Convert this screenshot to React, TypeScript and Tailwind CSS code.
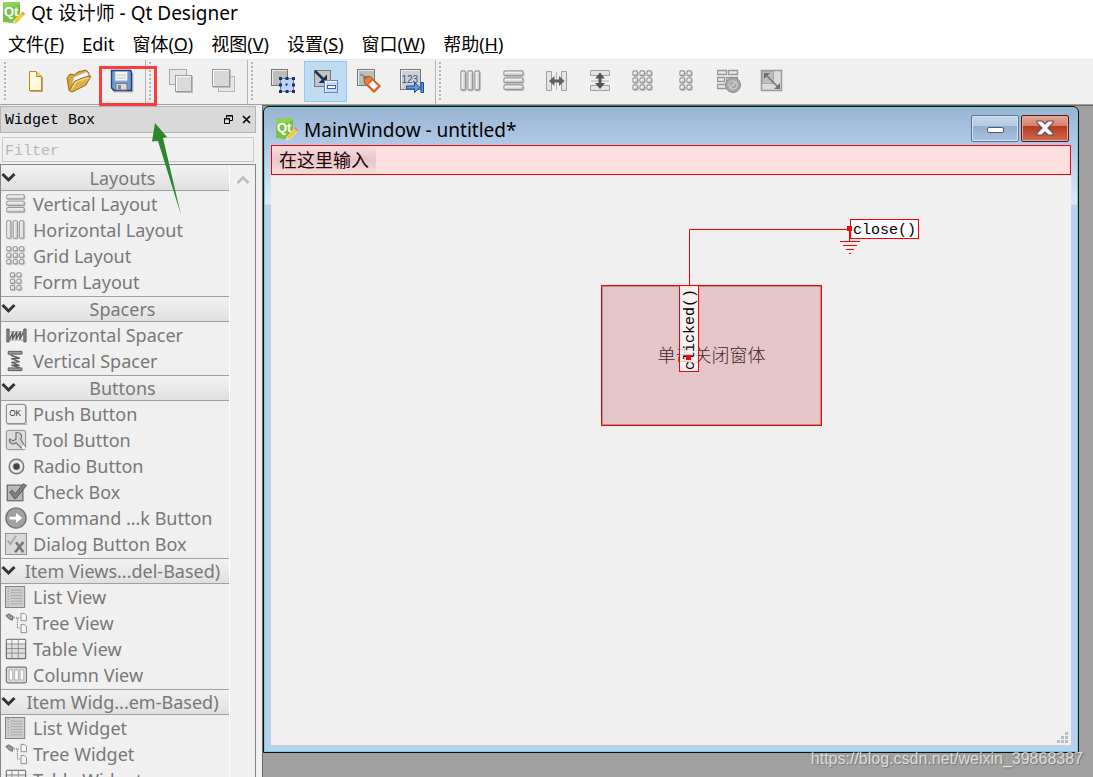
import React from "react";

type IconProps = { size?: number };
type Rect = [number, number, number, number];

const Svg = ({ size = 24, children }: { size?: number; children: React.ReactNode }) => (
  <svg width={size} height={size} viewBox="0 0 24 24" fill="none" className="shrink-0" aria-hidden="true">
    {children}
  </svg>
);

// small raised bars used by all the layout icons
const Cells = ({ size, rects }: IconProps & { rects: Rect[] }) => (
  <Svg size={size}>
    {rects.map(([x, y, w, h], i) => (
      <g key={i}>
        <rect x={x + 1} y={y + 1} width={w} height={h} rx="1" stroke="#c4c4c4" />
        <rect x={x} y={y} width={w} height={h} rx="1" fill="#dedede" stroke="#989898" strokeWidth="1.3" />
        <path d={`M${x + 1.2} ${y + h - 1}V${y + 1.2}H${x + w - 1}`} stroke="#fafafa" />
      </g>
    ))}
  </Svg>
);

const rowsRects: Rect[] = [[2, 2, 19, 4.5], [2, 9, 19, 4.5], [2, 16, 19, 4.5]];
const colsRects: Rect[] = [[2, 2, 4.5, 19], [9, 2, 4.5, 19], [16, 2, 4.5, 19]];
const gridRects: Rect[] = [2, 9, 16].flatMap((y) => [2, 9, 16].map((x): Rect => [x, y, 4.5, 4.5]));
const formRects: Rect[] = [2, 9, 16].flatMap((y) => [6, 13].map((x): Rect => [x, y, 4.5, 4.5]));

const RowsIcon = ({ size }: IconProps) => <Cells size={size} rects={rowsRects} />;
const ColsIcon = ({ size }: IconProps) => <Cells size={size} rects={colsRects} />;
const GridIcon = ({ size }: IconProps) => <Cells size={size} rects={gridRects} />;
const FormIcon = ({ size }: IconProps) => <Cells size={size} rects={formRects} />;

const QtLogo = () => (
  <svg width="24" height="24" viewBox="0 0 24 24" className="shrink-0" aria-hidden="true">
    <path d="M2 1.500L19 1V18L15 22.500L2 21Z" fill="#7ac143" />
    <path d="M2 1.500L19 1V3L2 10Z" fill="#8fd05b" />
    <text x="3" y="15" fill="#fff" fontSize="13" fontWeight="700" fontFamily="'Liberation Sans Narrow','Liberation Sans',sans-serif">Qt</text>
    <path d="M13 20L20 12L23 14.500L16 22L12 23Z" fill="#f7c81e" stroke="#fff" strokeWidth=".6" />
    <path d="M20 12L21.500 10.500L24 13L23 14.500Z" fill="#d98b7c" />
    <path d="M12 23L13 20L16 22Z" fill="#e9cf9f" />
  </svg>
);

const NewIcon = () => (
  <Svg>
    <path d="M5.500 2.500H12L17.500 7V21.500H5.500Z" fill="#fcf6c6" stroke="#b98d1c" />
    <path d="M7 4H12V8H16V20H7Z" fill="#fffbe2" />
    <path d="M12.500 2.500V7.500H17.500" fill="#f0d87a" stroke="#b98d1c" />
    <path d="M6 22.500H18.500V8" stroke="#8a7440" strokeOpacity=".6" />
  </Svg>
);

const OpenIcon = () => (
  <svg width="26" height="24" viewBox="0 0 26 24" aria-hidden="true">
    <path d="M1 9L4 5L8 6L12 3L20 1L23 4V9L8 22L3 21Z" fill="#d9a437" stroke="#9b6b12" />
    <path d="M6 16L8 8L20 3L22 4V10Z" fill="#fff" stroke="#bdbdbd" />
    <path d="M3 21.500L9 12L19 8L25 7L20 16L6 23Z" fill="#e0b04c" stroke="#9b6b12" />
    <path d="M6 20L10 13L23 8.500" stroke="#f8dc94" strokeWidth="1.200" fill="none" />
  </svg>
);

const SaveIcon = () => (
  <Svg>
    <path d="M1.500 1.500H20.500L21.500 3V21.500H4L1.500 19Z" fill="#6f9ad2" stroke="#213f78" strokeWidth="1.400" />
    <path d="M5 2.500H17.500V12H5Z" fill="#f4f6f8" stroke="#9fb5cc" />
    <path d="M6.500 6H16M6.500 9H16" stroke="#bcc4cc" />
    <path d="M6 14.500H17V21H6Z" fill="#dcdcdc" stroke="#7a7a7a" />
    <path d="M8 16H11V20.500H8Z" fill="#7a8796" />
    <path d="M4 22.800H22.800V4" stroke="#333" strokeOpacity=".4" />
  </Svg>
);

const RaiseIcon = () => (
  <Svg>
    <rect x=".5" y=".5" width="17" height="15" fill="#e6e6e6" stroke="#aaa" />
    <rect x="6.500" y="6.500" width="16" height="16" fill="#dadada" stroke="#9a9a9a" />
    <path d="M7.500 22V7.500H22" stroke="#fafafa" />
    <path d="M7 23.500H23.500V7" stroke="#bbb" />
  </Svg>
);

const LowerIcon = () => (
  <Svg>
    <rect x="6.500" y="7.500" width="16" height="15" fill="#e6e6e6" stroke="#b4b4b4" />
    <rect x=".5" y=".5" width="17" height="17" fill="#d8d8d8" stroke="#9a9a9a" />
    <path d="M1.500 17V1.500H17" stroke="#fafafa" />
    <path d="M1 18.500H18.500V1" stroke="#c0c0c0" />
  </Svg>
);

const EditWidgetsIcon = () => (
  <Svg>
    <rect x=".5" y=".5" width="16" height="16" fill="#bdbdbd" stroke="#777" />
    <path d="M1.500 16V1.500H16" stroke="#e8e8e8" />
    <rect x="9.500" y="9.500" width="13" height="13" fill="#bcd4fb" stroke="#6a82ad" />
    {[9.5, 16, 22.5].map((y) =>
      [9.5, 16, 22.5].map((x) => (
        <rect key={`${x}-${y}`} x={x - 1.5} y={y - 1.5} width={x === 16 && y === 16 ? 2 : 3} height={x === 16 && y === 16 ? 2 : 3} fill="#1f3156" />
      ))
    )}
  </Svg>
);

const EditSignalsIcon = () => (
  <Svg>
    <rect x=".5" y="1.500" width="16" height="16" fill="#c4c4c4" stroke="#777" />
    <path d="M1 2L11 12" stroke="#1f3156" strokeWidth="2.500" />
    <path d="M13 14V5.500L4.500 14Z" fill="#1f3156" />
    <rect x="10.500" y="11.500" width="13" height="12" fill="#c4dafc" stroke="#6b83ad" />
    <path d="M11.500 23V12.500H23" stroke="#fff" />
    <rect x="13.500" y="16.500" width="8" height="3" fill="#fff" stroke="#41639f" />
  </Svg>
);

const EditBuddiesIcon = () => (
  <Svg>
    <rect x=".5" y=".5" width="17" height="16" fill="#bcbcbc" stroke="#777" />
    <path d="M1.500 16V1.500H17" stroke="#ebebeb" />
    <path d="M7 8L13 7.500L23.500 17L17 23.500L7.500 14Z" fill="#e58340" stroke="#8a5530" />
    <path d="M15.500 10.500L22 17L17 22L10.500 15.500Z" fill="#fff" stroke="#f15a0c" strokeWidth="1.600" />
    <path d="M3 6C5 5 7 7 10 10" stroke="#555" />
  </Svg>
);

const TabOrderIcon = () => (
  <Svg>
    <rect x=".5" y=".5" width="20" height="20" fill="#cfcfcf" stroke="#777" />
    <path d="M1.500 20V1.500H20" stroke="#f0f0f0" />
    <text x="1.500" y="14" fill="#24589c" fontSize="10" fontFamily="'Liberation Sans Narrow','Liberation Sans',sans-serif">123</text>
    <path d="M6.500 17H14.500V13.500L20 18.500L14.500 23.500V20H6.500Z" fill="#5f9be6" stroke="#1d4a8c" />
    <path d="M21 13.500H23.500V23.500H21Z" fill="#5f9be6" stroke="#1d4a8c" />
  </Svg>
);

const HSplitIcon = () => (
  <Svg>
    <path d="M1.500 2.500H6.500V21.500H1.500ZM21.500 2.500H16.500V21.500H21.500Z" fill="#e4e4e4" stroke="#a0a0a0" />
    <path d="M11.500 3V21" stroke="#b5b5b5" />
    <path d="M4 12L9.500 7V10.500H14V7L19.500 12L14 17V13.500H9.500V17Z" fill="#606060" />
  </Svg>
);

const VSplitIcon = () => (
  <Svg>
    <path d="M2.500 1.500H21.500V6.500H2.500ZM2.500 16.500H21.500V21.500H2.500Z" fill="#e4e4e4" stroke="#a0a0a0" />
    <path d="M3 12H21" stroke="#b5b5b5" />
    <path d="M12 3.500L17 9.500H13.500V14H17L12 20L7 14H10.500V9.500H7Z" fill="#555" />
  </Svg>
);

const BreakLayoutIcon = () => (
  <Svg>
    <path d="M.5 1.500H9.500V5.500H.5ZM11.500 1.500H20.500V5.500H11.500ZM.5 8.500H7.500V12.500H.5ZM9.500 8.500H20.500V12.500H9.500ZM.5 15.500H9.500V19.500H.5Z" fill="#e8e8e8" stroke="#989898" strokeWidth="1.300" />
    <circle cx="16" cy="16" r="7.500" fill="#a6a6a6" stroke="#8c8c8c" />
    <circle cx="16" cy="16" r="4" stroke="#c8c8c8" strokeWidth="1.500" />
    <path d="M13 19L19 13" stroke="#c8c8c8" strokeWidth="1.800" />
  </Svg>
);

const AdjustSizeIcon = () => (
  <Svg>
    <rect x="1.500" y="1.500" width="20" height="20" fill="#dcdcdc" stroke="#999" strokeWidth="1.500" />
    <rect x="2.500" y="2.500" width="11" height="12" fill="#bdbdbd" stroke="#a8a8a8" />
    <path d="M6 6L18 18" stroke="#777" strokeWidth="1.600" />
    <path d="M4 4H10L4 10ZM20 20H14L20 14Z" fill="#707070" />
  </Svg>
);

const HSpacerIcon = ({ size }: IconProps) => (
  <Svg size={size}>
    <path d="M2 5.500H4.500V19.500H2ZM20.500 5.500H23V19.500H20.500Z" fill="#8a8a8a" stroke="#555" />
    <path d="M5 17L9 8L8 17L13 8L12 17L17 8L16 17L20 9" stroke="#5c5c5c" strokeWidth="1.500" />
    <path d="M5 8.500H20M5 17.500H20" stroke="#999" />
  </Svg>
);

const VSpacerIcon = ({ size }: IconProps) => (
  <Svg size={size}>
    <path d="M3.500 1.500H18.500V4.500H3.500ZM3.500 19.500H18.500V22.500H3.500Z" fill="#999" stroke="#555" />
    <path d="M6 5.500L16 9L7 9.500L16 13L7 13.500L16 17L7 16.500L16 19.500" stroke="#5c5c5c" strokeWidth="1.500" />
  </Svg>
);

const PushButtonIcon = ({ size }: IconProps) => (
  <Svg size={size}>
    <rect x="1.500" y="1.500" width="21" height="21" rx="2" fill="#eee" stroke="#777" />
    <path d="M2.500 23.500H23.500V3" stroke="#aaa" />
    <text x="4.500" y="14.500" fill="#333" fontSize="9" fontFamily="'Liberation Sans',sans-serif">OK</text>
  </Svg>
);

const ToolButtonIcon = ({ size }: IconProps) => (
  <Svg size={size}>
    <rect x="1.500" y="1.500" width="21" height="21" rx="2" fill="#dcdcdc" stroke="#888" />
    <path d="M12 4C16 3 20 7 17 11L21 18L18 21L12 15C8 18 4 15 5 11L9 13L12 11V8Z" fill="#d0d0d0" stroke="#777" strokeWidth="1.300" />
    <path d="M18 21L20 17L23 22Z" fill="#fff" />
  </Svg>
);

const RadioIcon = ({ size }: IconProps) => (
  <Svg size={size}>
    <circle cx="12.500" cy="12.500" r="8" fill="#cfcfcf" stroke="#777" strokeWidth="1.500" />
    <circle cx="12.500" cy="12.500" r="5.500" stroke="#f4f4f4" strokeWidth="1.500" />
    <circle cx="12.500" cy="12.500" r="3.500" fill="#444" />
  </Svg>
);

const CheckIcon = ({ size }: IconProps) => (
  <Svg size={size}>
    <rect x="2.500" y="4.500" width="17" height="17" fill="#b9b9b9" stroke="#6e6e6e" strokeWidth="1.400" />
    <path d="M5 12L8 10L11 14L20 3L23.500 5L12 19H10Z" fill="#808080" stroke="#585858" />
  </Svg>
);

const CommandIcon = ({ size }: IconProps) => (
  <Svg size={size}>
    <circle cx="12" cy="12" r="11" fill="#a2a2a2" stroke="#707070" strokeWidth="1.500" />
    <path d="M5 10.500H12V6.500L19 12L12 17.500V13.500H5Z" fill="#fff" />
  </Svg>
);

const DialogBoxIcon = ({ size }: IconProps) => (
  <Svg size={size}>
    <rect x=".5" y=".5" width="23" height="23" fill="#d8d8d8" stroke="#8c8c8c" />
    <path d="M3 8L6 12L12 3" stroke="#aaa" strokeWidth="2.200" />
    <path d="M12 10L20 21M20 10L11 21" stroke="#777" strokeWidth="2.800" />
  </Svg>
);

const ListIcon = ({ size }: IconProps) => (
  <Svg size={size}>
    <rect x=".5" y=".5" width="21" height="23" fill="#cfcfcf" stroke="#7c7c7c" />
    <path d="M3.500 2V22" stroke="#777" strokeDasharray="1 2" />
    <path d="M6 4.500H19M6 7.500H19M6 10.500H19M6 13.500H19M6 16.500H19M6 19.500H19" stroke="#a2a2a2" />
  </Svg>
);

const TreeIcon = ({ size }: IconProps) => (
  <Svg size={size}>
    <path d="M1 4L4 2L9 5L8 9L5 8Z" fill="#999" stroke="#666" />
    <path d="M10 6.500H16M13.500 7V17.500H16" stroke="#555" strokeDasharray="1 1" />
    <path d="M17.500 1.500H21L23.500 4V9.500H17.500ZM17.500 13.500H21L23.500 16V22.500H17.500Z" fill="#f4f4f4" stroke="#888" />
  </Svg>
);

const TableIcon = ({ size }: IconProps) => (
  <Svg size={size}>
    <rect x="1.500" y="1.500" width="21" height="21" rx="1" fill="#dedede" stroke="#6e6e6e" strokeWidth="1.300" />
    <path d="M2 2H22V6H2Z" fill="#f6f6f6" />
    <path d="M2 6.500H22M2 11.500H22M2 16.500H22M7.500 2V22M14.500 2V22" stroke="#8c8c8c" />
  </Svg>
);

const ColumnIcon = ({ size }: IconProps) => (
  <Svg size={size}>
    <rect x="1.500" y="3.500" width="22" height="17" rx="2" fill="#ddd" stroke="#777" strokeWidth="1.300" />
    <path d="M4.500 6.500H8.500V17.500H4.500ZM10.500 6.500H14.500V17.500H10.500ZM16.500 6.500H20.500V17.500H16.500Z" fill="#fff" stroke="#a8a8a8" />
  </Svg>
);

const menus = [
  { text: "文件", key: "F" },
  { text: "Edit" },
  { text: "窗体", key: "O" },
  { text: "视图", key: "V" },
  { text: "设置", key: "S" },
  { text: "窗口", key: "W" },
  { text: "帮助", key: "H" },
];

type Tool = { label: string; icon: React.FC<IconProps>; active?: boolean };

const toolGroups: Tool[][] = [
  [
    { label: "New", icon: NewIcon },
    { label: "Open", icon: OpenIcon },
    { label: "Save", icon: SaveIcon },
  ],
  [
    { label: "Send to Back", icon: RaiseIcon },
    { label: "Bring to Front", icon: LowerIcon },
  ],
  [
    { label: "Edit Widgets", icon: EditWidgetsIcon },
    { label: "Edit Signals/Slots", icon: EditSignalsIcon, active: true },
    { label: "Edit Buddies", icon: EditBuddiesIcon },
    { label: "Edit Tab Order", icon: TabOrderIcon },
  ],
  [
    { label: "Lay Out Horizontally", icon: ColsIcon },
    { label: "Lay Out Vertically", icon: RowsIcon },
    { label: "Horizontal Splitter", icon: HSplitIcon },
    { label: "Vertical Splitter", icon: VSplitIcon },
    { label: "Lay Out in a Grid", icon: GridIcon },
    { label: "Lay Out in a Form", icon: FormIcon },
    { label: "Break Layout", icon: BreakLayoutIcon },
    { label: "Adjust Size", icon: AdjustSizeIcon },
  ],
];

const sections: { title: string; items: [string, React.FC<IconProps>][] }[] = [
  {
    title: "Layouts",
    items: [
      ["Vertical Layout", RowsIcon],
      ["Horizontal Layout", ColsIcon],
      ["Grid Layout", GridIcon],
      ["Form Layout", FormIcon],
    ],
  },
  {
    title: "Spacers",
    items: [
      ["Horizontal Spacer", HSpacerIcon],
      ["Vertical Spacer", VSpacerIcon],
    ],
  },
  {
    title: "Buttons",
    items: [
      ["Push Button", PushButtonIcon],
      ["Tool Button", ToolButtonIcon],
      ["Radio Button", RadioIcon],
      ["Check Box", CheckIcon],
      ["Command ...k Button", CommandIcon],
      ["Dialog Button Box", DialogBoxIcon],
    ],
  },
  {
    title: "Item Views...del-Based)",
    items: [
      ["List View", ListIcon],
      ["Tree View", TreeIcon],
      ["Table View", TableIcon],
      ["Column View", ColumnIcon],
    ],
  },
  {
    title: "Item Widg...em-Based)",
    items: [
      ["List Widget", ListIcon],
      ["Tree Widget", TreeIcon],
      ["Table Widget", TableIcon],
    ],
  },
];

const ToolBar = () => (
  <div className="flex h-[46px] shrink-0 border-t border-b border-t-[#e8e8e8] border-b-[#a0a0a0] bg-[#f0f0f0] pl-px">
    {toolGroups.map((group, i) => (
      <div key={i} className={`flex items-center pr-0.5 pb-0.5 ${i < 3 ? "border-r border-[#b4b4b4]" : ""}`}>
        <div className="flex w-[13px] pl-[3px]">
          <svg width="3" height="38" aria-hidden="true">
            <path d="M1 0V38" stroke="#b4b4b4" strokeWidth="2" strokeDasharray="2 2" />
          </svg>
        </div>
        {group.map(({ label, icon: Icon, active }) => (
          <button
            key={label}
            aria-label={label}
            className={`flex h-[41px] w-[43px] items-center justify-center ${active ? "border border-[#90c8f6] bg-[#c0dcf3]" : ""}`}
          >
            <Icon />
          </button>
        ))}
      </div>
    ))}
  </div>
);

const WidgetBox = () => (
  <aside className="flex w-64 shrink-0 flex-col pt-px">
    <div className="flex h-[27px] shrink-0 items-center border border-[#b4b4b4] bg-[#d9d9d9] pl-1 font-['Liberation_Mono','Noto_Sans_CJK_SC',monospace] text-[15px]">
      <h2 className="flex-1 pt-1">Widget Box</h2>
      <button aria-label="Float" className="flex w-[18px] justify-center">
        <svg width="9" height="9" viewBox="0 0 9 9" fill="none" aria-hidden="true">
          <path d="M2.500 3V.5H8.500V5.500H6M2.500 1H8.500M.5 3.500H5.500V8.500H.5ZM.5 4H5.500" stroke="#000" />
        </svg>
      </button>
      <button aria-label="Close dock" className="flex w-[18px] justify-center">
        <svg width="9" height="9" viewBox="0 0 9 9" aria-hidden="true">
          <path d="M1 1L8 8M8 1L1 8" stroke="#000" strokeWidth="1.600" />
        </svg>
      </button>
    </div>
    <div className="px-0.5 pt-1 pb-0.5">
      <input
        aria-label="Filter"
        placeholder="Filter"
        className="block h-[25px] w-full border border-[#c8c8c8] bg-[#f0f0f0] px-0.5 pt-1 font-['Liberation_Mono','Noto_Sans_CJK_SC',monospace] text-[15px] placeholder:text-[#b8b8b8]"
      />
    </div>
    <div className="flex min-h-0 flex-1 overflow-hidden border-x border-t border-[#828790]">
      <div className="min-w-0 flex-1 text-[18px] leading-[26px] text-[#787878]">
        {sections.map(({ title, items }, i) => (
          <section key={title} className="pb-px">
            <button
              className={`flex h-[26px] w-full items-center border-b border-[#a0a0a0] bg-gradient-to-b from-[#f2f2f2] to-[#e0e0e0] ${i > 0 ? "border-t" : ""}`}
            >
              <svg width="15" height="12" viewBox="0 0 15 12" fill="none" className="shrink-0" aria-hidden="true">
                <path d="M1.500 2L7.500 8L13.500 2" stroke="#333" strokeWidth="3" />
              </svg>
              <span className="flex-1 text-center whitespace-nowrap">{title}</span>
            </button>
            <ul>
              {items.map(([name, Icon]) => (
                <li key={name} className="flex h-[26px] items-center gap-1.5 pl-1 whitespace-nowrap">
                  <Icon size={22} />
                  {name}
                </li>
              ))}
            </ul>
          </section>
        ))}
      </div>
      <div className="flex w-[26px] shrink-0 justify-center border-l border-white bg-[#f0f0f0] pt-2.5">
        <svg width="14" height="10" viewBox="0 0 14 10" fill="none" aria-hidden="true">
          <path d="M1.500 8L7 2.500L12.500 8" stroke="#bcbcbc" strokeWidth="2.500" />
        </svg>
      </div>
    </div>
  </aside>
);

const FormWindow = () => (
  <section className="flex flex-1 flex-col rounded-t-[6px] border border-[#111] bg-[linear-gradient(180deg,#99b4d1_0px,#b0c9e6_38px,#c3d6ee_60px,#dfeaf7_97px,#b9d1ea_98px)] px-[7px] pb-[7px] shadow-[inset_0_0_0_1px_#6fd0e0]">
    <header className="flex h-[38px] items-center pl-[3px]">
      <div className="pt-1.5">
        <QtLogo />
      </div>
      <h1 className="flex-1 pt-2 pl-1.5 text-[19px] text-black">MainWindow - untitled*</h1>
      <div className="flex gap-0.5 pt-1 pr-0.5">
        <button
          aria-label="Minimize"
          className="flex h-[27px] w-12 items-center justify-center rounded-xs border border-[#5c7595] bg-[linear-gradient(180deg,#c5d6ea_0%,#b4cae3_40%,#93aecb_42%,#a9c4e2_100%)] shadow-[inset_0_0_0_1px_#d3e1f1]"
        >
          <span className="mt-1 h-1.5 w-[17px] rounded-xs border border-[#555b66] bg-white" />
        </button>
        <button
          aria-label="Close"
          className="flex h-[27px] w-12 items-center justify-center rounded-xs border border-[#4b1a1a] bg-[linear-gradient(180deg,#e6a396_0%,#d6806f_40%,#b73a22_42%,#cf6a4e_100%)] shadow-[inset_0_0_0_1px_#e8a99b]"
        >
          <svg width="18" height="16" viewBox="0 0 18 16" aria-hidden="true">
            <path d="M1 1H6L9 4L12 1H17V3L12 8L17 13V15H12L9 12L6 15H1V13L6 8L1 3Z" fill="#f4f4f4" stroke="#5a5560" strokeWidth="1.200" />
          </svg>
        </button>
      </div>
    </header>
    <div className="flex h-[30px] shrink-0 border border-[#ff0000] bg-[#ffdfe0]">
      <button className="bg-gradient-to-b from-[#fcdcdd] via-[#e6c6c8] to-[#fbdcdd] px-[7px] text-[18px] leading-[28px] text-[#200000]">
        在这里输入
      </button>
    </div>
    <div className="relative flex-1 bg-[#f0f0f0] font-['Liberation_Mono','Noto_Sans_CJK_SC',monospace]">
      <button className="absolute top-[110px] left-[330px] h-[141px] w-[221px] border border-[#ff0000] bg-[#e5c6c8] pt-1 text-[18px] font-light text-[#402828] shadow-[inset_0_0_0_1px_#ad8f90]">
        单击关闭窗体
      </button>
      <svg width="170" height="70" viewBox="0 0 170 70" fill="none" className="absolute top-[50px] left-[418px]" aria-hidden="true">
        <path d="M.5 60V4.500H161" stroke="#f00" />
      </svg>
      <span className="absolute top-[44px] left-[579px] h-5 w-[69px] border border-[#ff0000] bg-white pt-0.5 pl-0.5 text-[15px] leading-[18px]">
        close()
      </span>
      <svg width="22" height="32" viewBox="0 0 22 32" fill="none" className="absolute top-[50px] left-[568px]" aria-hidden="true">
        <path d="M8 1H13V6H8ZM10 5H11V16H10Z" fill="#f00" />
        <path d="M1 16.500H21M4 20.500H18M7 24.500H15M10 28.500H12" stroke="#f00" />
      </svg>
      <span className="absolute top-[110px] left-[408px] h-[87px] w-5 rotate-180 border border-[#ff0000] bg-white/75 pt-px pr-0.5 text-[15px] leading-[18px] [writing-mode:vertical-rl]">
        clicked()
      </span>
      <span className="absolute top-[180px] left-[415px] h-[5px] w-[5px] bg-[#ff0000]" />
      <svg width="11" height="11" viewBox="0 0 11 11" className="absolute right-[3px] bottom-0.5" aria-hidden="true">
        <path d="M8 0H11V3H8ZM4 4H7V7H4ZM8 4H11V7H8ZM0 8H3V11H0ZM4 8H7V11H4ZM8 8H11V11H8Z" fill="#bdbdbd" />
      </svg>
    </div>
  </section>
);

export default function App() {
  return (
    <div className="relative flex h-screen flex-col overflow-hidden bg-[#f0f0f0] font-['Noto_Sans','Noto_Sans_CJK_SC',sans-serif] text-black">
      <header className="flex h-[26px] shrink-0 items-center gap-1.5 bg-white pl-px text-[19px] leading-6">
        <QtLogo />
        <h1>Qt 设计师 - Qt Designer</h1>
      </header>
      <nav className="flex h-[33px] shrink-0 items-center gap-0.5 bg-white pt-1 text-[18px]">
        {menus.map(({ text, key }) => (
          <button key={text} className="px-2 whitespace-nowrap">
            {key ? (
              <>
                {text}(<u>{key}</u>)
              </>
            ) : (
              <>
                <u>{text[0]}</u>
                {text.slice(1)}
              </>
            )}
          </button>
        ))}
      </nav>
      <ToolBar />
      <div className="flex min-h-0 flex-1">
        <WidgetBox />
        <main className="ml-1.5 flex min-w-0 flex-1 border-t border-l border-[#696969] bg-[#a0a0a0] pr-[14px] pb-6">
          <FormWindow />
        </main>
      </div>

      <div className="pointer-events-none absolute top-[66px] left-[99px] h-10 w-[58px] border-[3px] border-[#fa3c3c]" />
      <svg width="36" height="96" viewBox="0 0 36 96" className="pointer-events-none absolute top-[123px] left-[150px]" aria-hidden="true">
        <path d="M5 0L17 14L13 15L31 92L8 18L2 18.500Z" fill="#2e862e" />
      </svg>
      <p className="pointer-events-none absolute right-2.5 bottom-2 font-['Liberation_Sans',sans-serif] text-[16px] leading-5 text-white/70 [text-shadow:1px_1px_1px_#777]">
        https://blog.csdn.net/weixin_39868387
      </p>
    </div>
  );
}
